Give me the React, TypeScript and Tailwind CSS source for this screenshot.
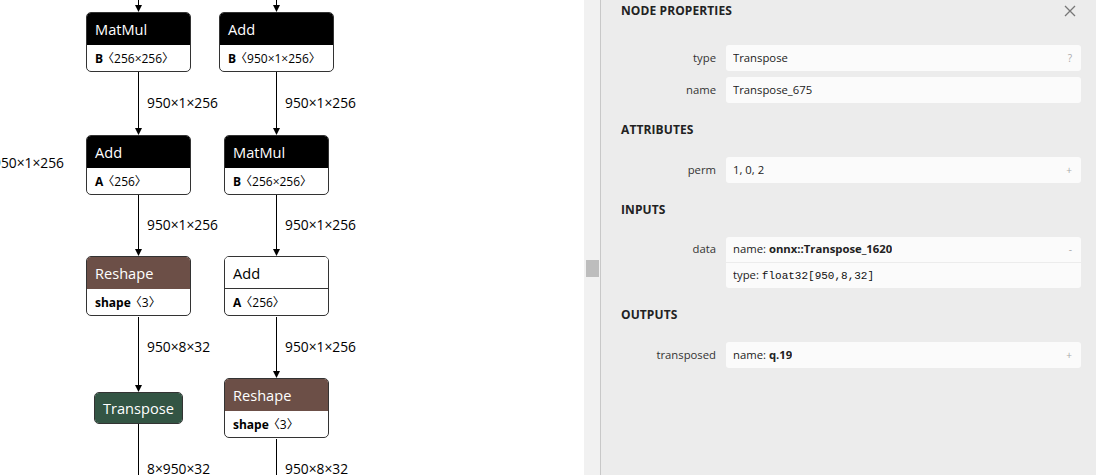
import React from 'react';

type GraphNode = {
    id: string;
    pos: string;
    title: string;
    head: string;
    attr?: [string, string];
};

const NODES: GraphNode[] = [
    { id: 'mm1', pos: 'left-[86px] top-[12px] w-[105px]', title: 'MatMul', head: 'bg-black text-white h-[32px]', attr: ['B', '〈256×256〉'] },
    { id: 'add1', pos: 'left-[219px] top-[12px] w-[115px]', title: 'Add', head: 'bg-black text-white h-[32px]', attr: ['B', '〈950×1×256〉'] },
    { id: 'add2', pos: 'left-[86px] top-[135px] w-[105px]', title: 'Add', head: 'bg-black text-white h-[32px]', attr: ['A', '〈256〉'] },
    { id: 'mm2', pos: 'left-[224px] top-[135px] w-[105px]', title: 'MatMul', head: 'bg-black text-white h-[32px]', attr: ['B', '〈256×256〉'] },
    { id: 'rs1', pos: 'left-[86px] top-[256px] w-[105px]', title: 'Reshape', head: 'bg-[#6c4f47] text-white h-[32px]', attr: ['shape', '〈3〉'] },
    { id: 'add3', pos: 'left-[224px] top-[256px] w-[105px]', title: 'Add', head: 'bg-white text-black h-[32px] border-b border-[#333]', attr: ['A', '〈256〉'] },
    { id: 'tr', pos: 'left-[94px] top-[392px] w-[89px]', title: 'Transpose', head: 'bg-[#335544] text-white h-[30px]' },
    { id: 'rs2', pos: 'left-[224px] top-[378px] w-[105px]', title: 'Reshape', head: 'bg-[#6c4f47] text-white h-[32px]', attr: ['shape', '〈3〉'] },
];

const LABELS: { pos: string; text: string }[] = [
    { pos: 'left-[147px] top-[93px]', text: '950×1×256' },
    { pos: 'left-[285px] top-[93px]', text: '950×1×256' },
    { pos: 'left-[-7px] top-[153px]', text: '950×1×256' },
    { pos: 'left-[147px] top-[215px]', text: '950×1×256' },
    { pos: 'left-[285px] top-[215px]', text: '950×1×256' },
    { pos: 'left-[147px] top-[337px]', text: '950×8×32' },
    { pos: 'left-[285px] top-[337px]', text: '950×1×256' },
    { pos: 'left-[147px] top-[459px]', text: '8×950×32' },
    { pos: 'left-[285px] top-[459px]', text: '950×8×32' },
];

// [x, from, to, arrow]
const EDGES: [number, number, number, boolean][] = [
    [138.5, 0, 12, true],
    [138.5, 72, 135, true],
    [138.5, 195, 256, true],
    [138.5, 317, 392, true],
    [138.5, 424, 475, false],
    [276.5, 0, 12, true],
    [276.5, 72, 135, true],
    [276.5, 195, 256, true],
    [276.5, 317, 378, true],
    [276.5, 439, 475, false],
];

const Graph: React.FC = () => (
    <div className="relative w-[584px] h-full shrink-0 overflow-hidden bg-white font-['Open_Sans','Noto_Sans_CJK_SC',sans-serif]">
        <svg className="absolute inset-0" width="584" height="475">
            {EDGES.map(([x, a, b, arrow], i) => (
                <g key={i}>
                    <line x1={x} y1={a} x2={x} y2={arrow ? b - 6 : b} stroke="#000" strokeWidth="1" />
                    {arrow && <polygon points={`${x},${b} ${x - 3.5},${b - 7} ${x + 3.5},${b - 7}`} fill="#000" />}
                </g>
            ))}
        </svg>
        {LABELS.map((l, i) => (
            <div key={i} className={`absolute ${l.pos} leading-[20px] text-[13.8px] text-black whitespace-nowrap`}>
                {l.text}
            </div>
        ))}
        {NODES.map((n) => (
            <div key={n.id} className={`absolute ${n.pos} border border-[#333] rounded-[5px] overflow-hidden bg-white`}>
                <div className={`${n.head} flex items-center pl-[8px] pt-[2px] text-[14.6px]`}>{n.title}</div>
                {n.attr && (
                    <div className="h-[26px] flex items-center pl-[8px] pt-[2px] text-[12px] text-black whitespace-nowrap">
                        <span className="font-bold">{n.attr[0]}</span>
                        <span className="ml-[-1px]">{n.attr[1]}</span>
                    </div>
                )}
            </div>
        ))}
    </div>
);

const Heading: React.FC<{ children: React.ReactNode }> = ({ children }) => (
    <div className="mt-[16px] mb-[16px] h-[22px] flex items-center text-[12px] font-bold text-[#222] tracking-[0.1px]">{children}</div>
);

const Box: React.FC<{ children: React.ReactNode; mark?: string; className?: string }> = ({ children, mark, className = '' }) => (
    <div className={`h-[25px] flex items-center justify-between pl-[7px] pr-[9px] ${className}`}>
        <div className="truncate">{children}</div>
        {mark && <span className="text-[10px] text-[#aaa]">{mark}</span>}
    </div>
);

const Row: React.FC<{ label: string; children: React.ReactNode; first?: boolean }> = ({ label, children, first }) => (
    <div className={`flex ${first ? '' : 'mt-[6px]'}`}>
        <div className="w-[95px] shrink-0 h-[26px] flex items-center justify-end text-[#333]">{label}</div>
        <div className="ml-[10px] flex-1 bg-[#fbfbfb] rounded-[3px] overflow-hidden">{children}</div>
    </div>
);

const Sidebar: React.FC = () => (
    <div className="flex-1 h-full border-l border-[#c8c8c8] bg-[#ececec] pl-[20px] pr-[15px] text-[11.3px] text-[#222] font-['Open_Sans',sans-serif]">
        <div className="h-[21px] flex items-center justify-between">
            <span className="text-[12px] font-bold text-[#222] tracking-[0.1px]">NODE PROPERTIES</span>
            <svg width="12" height="12" viewBox="0 0 12 12" className="mr-[5px]">
                <path d="M1 1 L11 11 M11 1 L1 11" stroke="#777" strokeWidth="1.3" />
            </svg>
        </div>
        <div className="mt-[24px]">
            <Row label="type" first>
                <Box mark="?" className="h-[26px]">Transpose</Box>
            </Row>
            <Row label="name">
                <Box className="h-[26px]">Transpose_675</Box>
            </Row>
        </div>
        <Heading>ATTRIBUTES</Heading>
        <Row label="perm" first>
            <Box mark="+" className="h-[26px]">1, 0, 2</Box>
        </Row>
        <Heading>INPUTS</Heading>
        <div className="flex">
            <div className="w-[95px] shrink-0 h-[25px] flex items-center justify-end text-[#333]">data</div>
            <div className="ml-[10px] flex-1 bg-[#fbfbfb] rounded-[3px] overflow-hidden">
                <Box mark="-">
                    name: <span className="font-bold">onnx::Transpose_1620</span>
                </Box>
                <div className="h-px bg-[#ececec]" />
                <Box>
                    type: <span className="font-['Liberation_Mono',monospace] text-[11px] text-[#111]">float32[950,8,32]</span>
                </Box>
            </div>
        </div>
        <Heading>OUTPUTS</Heading>
        <Row label="transposed" first>
            <Box mark="+" className="h-[26px]">
                name: <span className="font-bold">q.19</span>
            </Box>
        </Row>
    </div>
);

const App: React.FC = () => {
    return (
        <div className="flex w-[1096px] h-[475px] overflow-hidden bg-white">
            <Graph />
            <div className="w-[16px] h-full shrink-0 bg-[#f1f1f1]">
                <div className="mt-[260px] ml-[2px] w-[13px] h-[17px] bg-[#bdbdbd]" />
            </div>
            <Sidebar />
        </div>
    );
};

export default App;
